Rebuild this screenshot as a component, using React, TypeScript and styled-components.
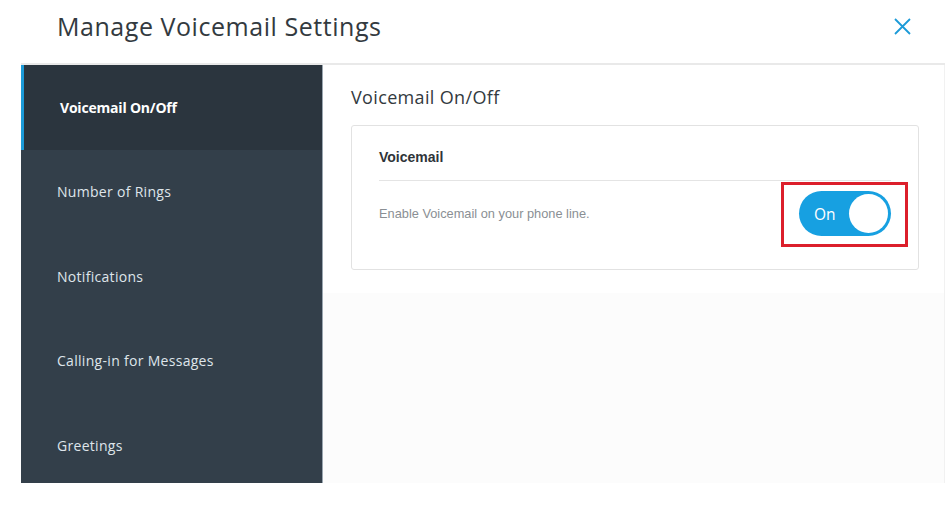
import React from "react";
import styled, { createGlobalStyle } from "styled-components";

const GlobalStyle = createGlobalStyle`
  html, body { margin: 0; padding: 0; background: #ffffff; }
  body { font-family: "Open Sans", "Liberation Sans", sans-serif; }
  * { box-sizing: border-box; }
`;

const Modal = styled.div`
  margin-left: 21px;
  width: 924px;
  height: 483px;
  display: flex;
  flex-direction: column;
  background: #ffffff;
`;

const Header = styled.header`
  height: 65px;
  flex: none;
  display: flex;
  align-items: center;
  justify-content: space-between;
  padding: 0 34px 11px 36px;
  border-bottom: 2px solid #e9e9e9;
`;

const Title = styled.h1`
  margin: 0;
  font-family: "Open Sans", sans-serif;
  font-weight: 400;
  font-size: 25px;
  line-height: 30px;
  color: #333a40;
  letter-spacing: 0.55px;
`;

const CloseButton = styled.button`
  border: 0;
  background: none;
  padding: 0;
  width: 18px;
  height: 18px;
  display: flex;
  align-items: center;
  justify-content: center;
  color: #1c9bd8;
  cursor: pointer;
`;

const Body = styled.div`
  flex: 1;
  display: flex;
  min-height: 0;
`;

const Sidebar = styled.nav`
  width: 302px;
  flex: none;
  background: #333f4a;
  border-right: 1px solid #9aa6b0;
  display: flex;
  flex-direction: column;
  overflow: hidden;
`;

const NavItem = styled.div<{ $active?: boolean }>`
  height: 84.5px;
  flex: none;
  display: flex;
  align-items: center;
  padding-left: 36px;
  background: ${(p) => (p.$active ? "#2b353e" : "transparent")};
  border-left: 3px solid ${(p) => (p.$active ? "#1c9bd8" : "transparent")};
  font-family: "Open Sans", sans-serif;
  font-size: 14px;
  font-weight: ${(p) => (p.$active ? 700 : 400)};
  color: ${(p) => (p.$active ? "#ffffff" : "#dfe5ea")};
  margin-left: ${(p) => (p.$active ? "0" : "-3px")};
  letter-spacing: ${(p) => (p.$active ? "-0.2px" : "0.3px")};
`;

const Content = styled.main`
  flex: 1;
  background: #fcfcfc;
  border-right: 1px solid #f1f1f1;
  display: flex;
  flex-direction: column;
`;

const Section = styled.section`
  background: #ffffff;
  padding: 20px 25px 23px 28px;
`;

const SectionTitle = styled.h2`
  margin: 0 0 16px;
  font-family: "Open Sans", sans-serif;
  font-weight: 400;
  font-size: 18px;
  line-height: 24px;
  color: #333a40;
  letter-spacing: 0.35px;
`;

const Card = styled.div`
  border: 1px solid #e2e2e2;
  border-radius: 3px;
  background: #ffffff;
  height: 145px;
`;

const CardHeader = styled.div`
  margin: 0 27px 0 27px;
  padding: 22px 0 14px;
  border-bottom: 1px solid #e4e4e4;
  font-family: "Liberation Sans", Arial, sans-serif;
  font-weight: 700;
  font-size: 14px;
  line-height: 18px;
  color: #2f3439;
`;

const Row = styled.div`
  display: flex;
  align-items: center;
  justify-content: space-between;
  padding: 10px 27px 0 27px;
`;

const Description = styled.p`
  margin: 0;
  font-family: "Liberation Sans", Arial, sans-serif;
  font-size: 12.8px;
  color: #8a8f94;
`;

const ToggleWrap = styled.div`
  position: relative;
`;

const Highlight = styled.span`
  position: absolute;
  top: -9px;
  bottom: -11px;
  left: -18px;
  right: -17px;
  border: 3px solid #dc1f2b;
  pointer-events: none;
`;

const Toggle = styled.button<{ $on: boolean }>`
  width: 92px;
  height: 45px;
  border-radius: 23px;
  border: 0;
  padding: 0 3px 0 15px;
  background: ${(p) => (p.$on ? "#17a0e1" : "#c5cbd0")};
  display: flex;
  align-items: center;
  justify-content: space-between;
  cursor: pointer;
`;

const ToggleLabel = styled.span`
  font-family: "Open Sans", sans-serif;
  font-size: 15.5px;
  color: #ffffff;
`;

const Knob = styled.span`
  width: 39px;
  height: 39px;
  border-radius: 50%;
  background: #ffffff;
`;

const navItems = [
  "Voicemail On/Off",
  "Number of Rings",
  "Notifications",
  "Calling-in for Messages",
  "Greetings",
];

export default function App() {
  return (
    <>
      <GlobalStyle />
      <Modal>
        <Header>
          <Title>Manage Voicemail Settings</Title>
          <CloseButton aria-label="Close">
            <svg width="17" height="17" viewBox="0 0 17 17">
              <path d="M1 1L16 16M16 1L1 16" stroke="currentColor" strokeWidth="1.8" fill="none" />
            </svg>
          </CloseButton>
        </Header>
        <Body>
          <Sidebar>
            {navItems.map((item, i) => (
              <NavItem key={item} $active={i === 0}>
                {item}
              </NavItem>
            ))}
          </Sidebar>
          <Content>
            <Section>
              <SectionTitle>Voicemail On/Off</SectionTitle>
              <Card>
                <CardHeader>Voicemail</CardHeader>
                <Row>
                  <Description>Enable Voicemail on your phone line.</Description>
                  <ToggleWrap>
                    <Toggle $on>
                      <ToggleLabel>On</ToggleLabel>
                      <Knob />
                    </Toggle>
                    <Highlight />
                  </ToggleWrap>
                </Row>
              </Card>
            </Section>
          </Content>
        </Body>
      </Modal>
    </>
  );
}
